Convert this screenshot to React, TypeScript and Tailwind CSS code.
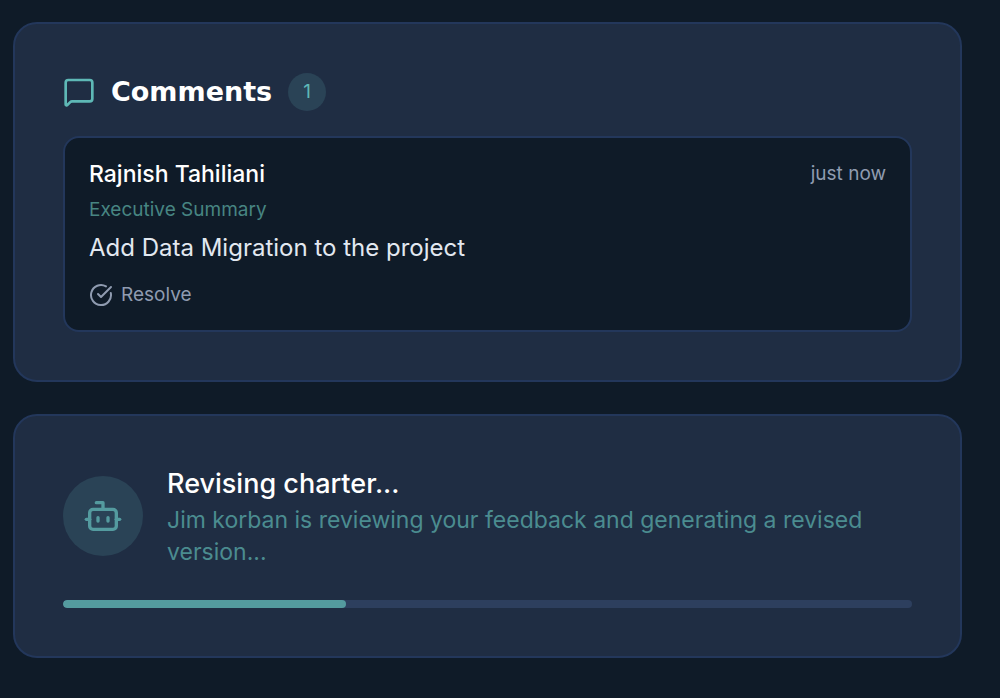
import { Bot, CircleCheckBig, MessageSquare } from 'lucide-react'

const comments = [
  {
    id: 1,
    author: 'Rajnish Tahiliani',
    time: 'just now',
    section: 'Executive Summary',
    text: 'Add Data Migration to the project',
  },
]

function CommentCard({ comment }: { comment: (typeof comments)[number] }) {
  return (
    <li className="rounded-2xl border-2 border-[#23375b] bg-[#0f1b28] p-6">
      <div className="flex items-center justify-between">
        <span className="text-[23px] leading-6 font-medium text-white">{comment.author}</span>
        <span className="text-[19px] leading-6 text-[#8f9bb0]">{comment.time}</span>
      </div>
      <p className="mt-2 text-[19px] leading-8 text-[#478582]">{comment.section}</p>
      <p className="mt-1 text-2xl leading-9 text-[#e2e8f0]">{comment.text}</p>
      <button type="button" className="mt-[18px] flex h-[22px] items-center gap-2 text-[19px] text-[#8f9bb0]">
        <CircleCheckBig className="h-6 w-6" />
        Resolve
      </button>
    </li>
  )
}

export default function App() {
  const progress = 33.3

  return (
    <div className="min-h-screen bg-[#0f1b28] pt-[22px] pr-[38px] pb-10 pl-[13px] font-['Inter',sans-serif]">
      <div className="flex flex-col gap-8">
        {/* Comments */}
        <section className="rounded-3xl border-2 border-[#23375b] bg-[#1f2d43] p-12">
          <div className="mb-6 flex h-10 items-center gap-4">
            <MessageSquare className="h-8 w-8 text-[#5eb8b6]" />
            <h2 className="font-['DejaVu_Sans',sans-serif] text-[27px] leading-10 font-semibold text-white">Comments</h2>
            <span className="flex h-[38px] w-[38px] items-center justify-center rounded-full bg-[#2a4356] text-[19px] text-[#5eb8b6]">
              {comments.length}
            </span>
          </div>
          <ul>
            {comments.map((comment) => (
              <CommentCard key={comment.id} comment={comment} />
            ))}
          </ul>
        </section>

        {/* Revision status */}
        <section className="rounded-3xl border-2 border-[#23375b] bg-[#1f2d43] p-12">
          <div className="flex items-center gap-6">
            <div className="flex h-20 w-20 shrink-0 items-center justify-center rounded-full bg-[#2a4356]">
              <Bot className="h-10 w-10 text-[#549b9f]" />
            </div>
            <div>
              <h3 className="text-[27px] leading-10 font-medium text-white">Revising charter...</h3>
              <p className="text-[23px] leading-8 text-[#4b8c90]">
                Jim korban is reviewing your feedback and generating a revised version...
              </p>
            </div>
          </div>
          <div
            role="progressbar"
            aria-label="Revision progress"
            aria-valuenow={progress}
            className="mt-8 h-2 overflow-hidden rounded-full bg-[#2d3f5e]"
          >
            <div className="h-full rounded-full bg-[#549b9f]" style={{ width: `${progress}%` }} />
          </div>
        </section>
      </div>
    </div>
  )
}
